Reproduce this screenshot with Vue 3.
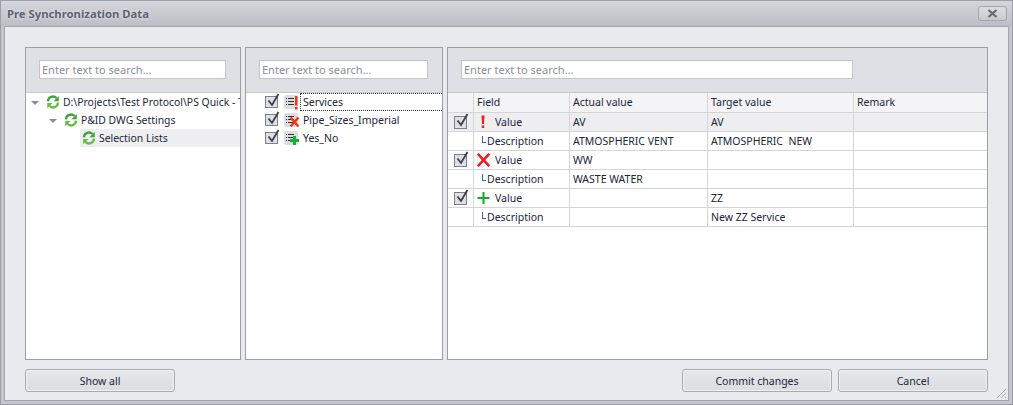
<script setup>
const tree = [
  { label: 'D:\\Projects\\Test Protocol\\PS Quick - Test', level: 0, arrow: true },
  { label: 'P&ID DWG Settings', level: 1, arrow: true },
  { label: 'Selection Lists', level: 2, arrow: false, selected: true }
]
const lists = [
  { label: 'Services', kind: 'warn', focus: true },
  { label: 'Pipe_Sizes_Imperial', kind: 'del' },
  { label: 'Yes_No', kind: 'add' }
]
const rows = [
  { kind: 'warn', field: 'Value', actual: 'AV', target: 'AV', first: true },
  { field: 'Description', actual: 'ATMOSPHERIC VENT', target: 'ATMOSPHERIC  NEW' },
  { kind: 'del', field: 'Value', actual: 'WW', target: '' },
  { field: 'Description', actual: 'WASTE WATER', target: '' },
  { kind: 'add', field: 'Value', actual: '', target: 'ZZ' },
  { field: 'Description', actual: '', target: 'New ZZ Service' }
]
</script>

<template>
  <div class="window">
    <header class="titlebar">
      <span class="title">Pre Synchronization Data</span>
      <button class="close" aria-label="Close">
        <svg width="11" height="9" viewBox="0 0 11 9"><path d="M1.5 1 L9.5 8 M9.5 1 L1.5 8" stroke="#666a74" stroke-width="2.2" fill="none" /></svg>
      </button>
    </header>
    <main class="content">
      <div class="panels">
        <section class="panel left">
          <div class="search"><div class="input">Enter text to search...</div></div>
          <div class="tree">
            <div v-for="n in tree" :key="n.label" class="node" :class="['lvl' + n.level, { selected: n.selected }]">
              <span class="arrow" :class="{ none: !n.arrow }"></span>
              <span class="nodebody">
                <svg class="sync" width="14" height="14" viewBox="0 0 16 16">
                  <path d="M2.2 7.2 A5.8 5.8 0 0 1 12 3.4" stroke="#3fa33a" stroke-width="2.6" fill="none" />
                  <path d="M14.6 1 V7 H8.6 Z" fill="#3fa33a" />
                  <path d="M13.8 8.8 A5.8 5.8 0 0 1 4 12.6" stroke="#62bd3c" stroke-width="2.6" fill="none" />
                  <path d="M1.4 15 V9 H7.4 Z" fill="#62bd3c" />
                </svg>
                <span class="nodetext">{{ n.label }}</span>
              </span>
            </div>
          </div>
        </section>

        <section class="panel middle">
          <div class="search"><div class="input">Enter text to search...</div></div>
          <div class="lists">
            <div v-for="l in lists" :key="l.label" class="listrow">
              <span class="check">
                <svg width="16" height="16" viewBox="0 0 16 16"><path d="M3.5 7.5 L7 12 L13.5 1" stroke="#3c3f48" stroke-width="1.8" fill="none" /></svg>
              </span>
              <span class="listicon">
                <svg width="16" height="16" viewBox="0 0 16 16">
                  <path d="M2 3.5 H3 M4 3.5 H10 M2 6.5 H3 M4 6.5 H10 M2 9.5 H3 M4 9.5 H10" stroke="#2e3138" stroke-width="1" fill="none" />
                  <path v-if="l.kind === 'warn'" d="M11 1 H13.5 V10.5 H11 Z M11 12 H13.5 V14.5 H11 Z" fill="#f03a17" />
                  <path v-if="l.kind === 'del'" d="M6.5 4.5 L14.5 13.5 M14.5 4.5 L6.5 13.5" stroke="#f03a17" stroke-width="2.6" fill="none" />
                  <path v-if="l.kind === 'add'" d="M10.5 5 V14 M6 9.5 H15" stroke="#0fb52b" stroke-width="3" fill="none" />
                </svg>
              </span>
              <span class="listtext" :class="{ focus: l.focus }">{{ l.label }}</span>
            </div>
          </div>
        </section>

        <section class="panel right">
          <div class="search wide"><div class="input">Enter text to search...</div></div>
          <div class="grid">
            <div class="gridrow head">
              <div class="cell c0"></div>
              <div class="cell c1">Field</div>
              <div class="cell c2">Actual value</div>
              <div class="cell c3">Target value</div>
              <div class="cell c4">Remark</div>
            </div>
            <div v-for="(r, i) in rows" :key="i" class="gridrow" :class="{ active: r.first }">
              <div class="cell c0">
                <span v-if="r.kind" class="check small">
                  <svg width="16" height="16" viewBox="0 0 16 16"><path d="M3.5 7.5 L7 12 L13.5 1" stroke="#3c3f48" stroke-width="1.8" fill="none" /></svg>
                </span>
              </div>
              <div class="cell c1">
                <template v-if="r.kind">
                  <svg class="rowicon" width="14" height="14" viewBox="0 0 14 14">
                    <path v-if="r.kind === 'warn'" d="M4.5 0.5 H7.5 L7 9 H5 Z M4.8 10.5 H7.2 V13 H4.8 Z" fill="#ee1c25" />
                    <path v-if="r.kind === 'del'" d="M0.8 0.8 L12.2 13.2 M12.2 0.8 L0.8 13.2" stroke="#ee1c25" stroke-width="2.6" fill="none" />
                    <path v-if="r.kind === 'add'" d="M6.5 1 V13 M0.5 7 H12.5" stroke="#0fb01f" stroke-width="2" fill="none" />
                  </svg>
                  <span class="valuelabel">{{ r.field }}</span>
                </template>
                <template v-else>
                  <span class="elbow"></span>
                  <span>{{ r.field }}</span>
                </template>
              </div>
              <div class="cell c2">{{ r.actual }}</div>
              <div class="cell c3">{{ r.target }}</div>
              <div class="cell c4"></div>
            </div>
          </div>
        </section>
      </div>
      <footer class="footer">
        <button class="btn">Show all</button>
        <span class="spacer"></span>
        <button class="btn">Commit changes</button>
        <button class="btn">Cancel</button>
      </footer>
      <svg class="grip" width="12" height="12" viewBox="0 0 12 12">
        <path d="M11 2 L2 11 M11 6 L6 11 M11 10 L10 11" stroke="#a4a6ae" stroke-width="1" fill="none" />
      </svg>
    </main>
  </div>
</template>

<style>
html, body { margin: 0; padding: 0; background: #c4c6cc; }
</style>

<style scoped>
.window {
  width: 1013px;
  height: 405px;
  box-sizing: border-box;
  display: flex;
  flex-direction: column;
  overflow: hidden;
  border: 1px solid #9c9ea8;
  background: #c4c6cc;
  font-family: "Noto Sans", "Liberation Sans", sans-serif;
  font-size: 10.5px;
  color: #20263a;
}
.titlebar {
  height: 25px;
  flex: none;
  display: flex;
  align-items: center;
  justify-content: space-between;
  padding: 0 5px 0 6px;
  background: linear-gradient(#d4d6db, #bcbec5);
}
.title {
  font-weight: 700;
  font-size: 11.3px;
  color: #5c6270;
  text-shadow: 0 0 3px #eef0f4;
}
.close {
  width: 29px;
  height: 15px;
  padding: 0;
  display: flex;
  align-items: center;
  justify-content: center;
  border: 1px solid #a2a4ac;
  border-radius: 3px;
  background: linear-gradient(#dcdde1, #c8cace);
}
.content {
  position: relative;
  flex: 1;
  margin: 0 3px 3px;
  box-sizing: border-box;
  border: 1px solid #a4a6ae;
  background: #e9eaee;
  padding: 20px 20px 8px 20px;
  display: flex;
  flex-direction: column;
}
.panels {
  height: 313px;
  flex: none;
  display: flex;
  gap: 4px;
}
.panel {
  box-sizing: border-box;
  border: 1px solid #9c9ea8;
  background: #fff;
  display: flex;
  flex-direction: column;
  overflow: hidden;
  flex: none;
}
.left { width: 216px; }
.middle { width: 198px; }
.right { width: 541px; }
.search {
  height: 45px;
  flex: none;
  box-sizing: border-box;
  padding: 12px 14px 0 13px;
  background: #dfe0e5;
  border-bottom: 1px solid #c8c9ce;
}
.search.wide { padding-right: 134px; }
.input {
  height: 19px;
  box-sizing: border-box;
  border: 1px solid #c4c5cb;
  background: #fff;
  color: #8c8f99;
  font-size: 11px;
  line-height: 17px;
  padding-left: 2px;
  white-space: nowrap;
  overflow: hidden;
}
.node {
  height: 18px;
  display: flex;
  align-items: center;
  white-space: nowrap;
}
.lvl0 { padding-left: 5px; }
.lvl1 { padding-left: 23px; }
.lvl2 { padding-left: 41px; }
.arrow {
  width: 0;
  height: 0;
  margin-right: 7px;
  flex: none;
  box-sizing: content-box;
  border-left: 4px solid transparent;
  border-right: 4px solid transparent;
  border-top: 4px solid #8a8d96;
  transform: translateY(1px);
}
.arrow.none { border: 0; margin: 0 0 0 13px; }
.nodebody {
  flex: 1;
  min-width: 0;
  height: 18px;
  display: flex;
  align-items: center;
  gap: 3px;
  overflow: hidden;
}
.lvl2 .nodebody { padding-left: 2px; }
.selected .nodebody { background: #eeeef0; }
.sync { flex: none; }
.nodetext { font-size: 10.4px; }
.listrow {
  height: 18px;
  display: flex;
  align-items: center;
  padding-left: 19px;
  white-space: nowrap;
}
.check {
  width: 13px;
  height: 12px;
  box-sizing: border-box;
  flex: none;
  position: relative;
  border: 1px solid #7c7f8c;
  background: #dfe0e6;
  display: block;
}
.check svg {
  position: absolute;
  left: -1px;
  top: -4px;
}
.listicon {
  width: 14px;
  height: 14px;
  margin-left: 6px;
  flex: none;
  background: #dcdde0;
  border-radius: 2px;
  position: relative;
}
.listicon svg { position: absolute; left: 0; top: 0; }
.listtext {
  margin-left: 2px;
  padding-left: 2px;
  flex: 1;
  height: 18px;
  line-height: 17px;
  box-sizing: border-box;
  border: 1px solid transparent;
}
.listtext.focus { border: 1px dotted #30323a; border-right: 0; }
.grid { display: flex; flex-direction: column; }
.gridrow {
  height: 19px;
  box-sizing: border-box;
  display: flex;
  border-bottom: 1px solid #d4d5d9;
}
.head { height: 20px; background: #f4f4f6; }
.head .cell { padding-bottom: 2px; }
.active { background: #eeeef0; }
.cell {
  box-sizing: border-box;
  height: 100%;
  display: flex;
  align-items: center;
  padding-left: 3px;
  border-right: 1px solid #d4d5d9;
  white-space: pre;
  overflow: hidden;
  flex: none;
}
.c0 { width: 26px; padding-left: 6px; }
.c1 { width: 96px; }
.c2 { width: 138px; }
.c3 { width: 146px; }
.c4 { width: 133px; border-right: 0; }
.check.small { width: 13px; height: 13px; }
.rowicon { flex: none; }
.valuelabel { margin-left: 4px; }
.elbow {
  width: 4px;
  height: 7px;
  margin: -4px 1px 0 5px;
  box-sizing: border-box;
  border-left: 1px solid #3c64b4;
  border-bottom: 1px solid #3c64b4;
  flex: none;
}
.footer {
  height: 23px;
  margin-top: 9px;
  display: flex;
  gap: 6px;
}
.spacer { flex: 1; }
.btn {
  width: 150px;
  height: 23px;
  padding: 0;
  border: 1px solid #a8aab2;
  border-radius: 3px;
  background: linear-gradient(#e6e7ea, #dcdde1);
  box-shadow: inset 0 0 0 1px #eff0f2;
  font: inherit;
  color: #20263a;
}
.grip { position: absolute; right: 1px; bottom: 1px; }
</style>
